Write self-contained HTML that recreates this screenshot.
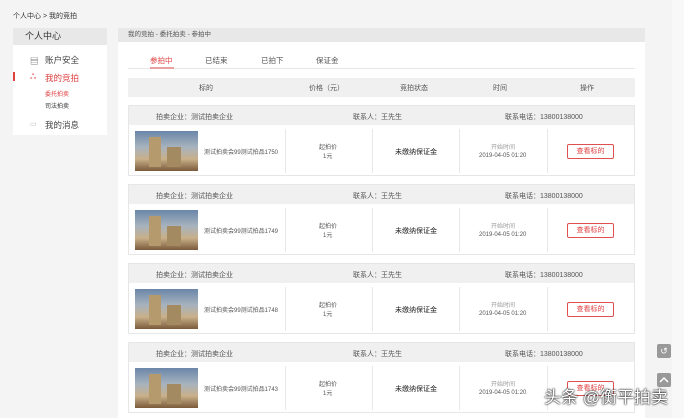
<!DOCTYPE html><html><head><meta charset="utf-8"><style>
*{margin:0;padding:0;box-sizing:border-box}
body{width:684px;height:418px;overflow:hidden;background:#f4f4f4;font-family:"Liberation Sans","Noto Sans CJK SC",sans-serif;position:relative;color:#333}
.a{position:absolute}
.t{font-size:7px;color:#555;white-space:nowrap}
.card{position:absolute;left:128px;width:507px;height:71px;background:#fff;border:1px solid #e6e6e6}
.ch{height:19px;background:#f0f0f0;position:relative}
.img{position:absolute;left:6px;top:25px;width:63px;height:40px;background:linear-gradient(180deg,#6a86a8 0%,#a7b3be 40%,#c9b08a 70%,#7a5a3a 100%)}
.img:before{content:"";position:absolute;left:14px;top:6px;width:12px;height:30px;background:#b59a6e}
.img:after{content:"";position:absolute;left:32px;top:16px;width:14px;height:20px;background:#a48a60}
.dv{position:absolute;top:23px;width:1px;height:44px;background:#e8e8e8}
.btn{position:absolute;left:438px;top:38px;width:47px;height:15px;border:1px solid #e05050;border-radius:2px;color:#e04040;font-size:7px;text-align:center;line-height:13px}
</style></head><body>
<div class="a t" style="left:13px;top:11px;color:#333">个人中心 &gt; 我的竞拍</div>
<div class="a" style="left:13px;top:28px;width:94px;height:107px;background:#fff"></div>
<div class="a" style="left:13px;top:28px;width:94px;height:17px;background:#e8e8e8;font-size:9px;line-height:17px;padding-left:12px">个人中心</div>
<div class="a t" style="left:30px;top:55px;font-size:8.5px">▤</div>
<div class="a" style="left:45px;top:54px;font-size:8.5px;color:#444">账户安全</div>
<div class="a" style="left:13px;top:72px;width:2px;height:9px;background:#e04040"></div>
<div class="a" style="left:30px;top:72px;font-size:8px;color:#e04040">ஃ</div>
<div class="a" style="left:45px;top:72px;font-size:8.5px;color:#e04040">我的竞拍</div>
<div class="a" style="left:45px;top:89px;font-size:6px;color:#e04040">委托拍卖</div>
<div class="a" style="left:45px;top:101px;font-size:6px;color:#333">司法拍卖</div>
<div class="a" style="left:30px;top:120px;font-size:7px;color:#bbb">▭</div>
<div class="a" style="left:45px;top:119px;font-size:8.5px;color:#444">我的消息</div>
<div class="a" style="left:118px;top:28px;width:527px;height:390px;background:#fff"></div>
<div class="a t" style="left:118px;top:28px;width:527px;height:14px;background:#e8e8e8;line-height:14px;padding-left:10px;font-size:6.5px">我的竞拍 - 委托拍卖 - 参拍中</div>
<div class="a" style="left:128px;top:68px;width:507px;height:1px;background:#e6e6e6"></div>
<div class="a" style="left:150px;top:67px;width:24px;height:2px;background:#e9a0a0"></div>
<div class="a t" style="left:150px;top:55px;color:#e04040;font-size:7.5px">参拍中</div>
<div class="a t" style="left:205px;top:55px;font-size:7.5px">已结束</div>
<div class="a t" style="left:261px;top:55px;font-size:7.5px">已拍下</div>
<div class="a t" style="left:316px;top:55px;font-size:7.5px">保证金</div>
<div class="a" style="left:128px;top:78px;width:507px;height:19px;background:#f0f0f0"></div>
<div class="a t" style="left:199px;top:83px">标的</div>
<div class="a t" style="left:309px;top:83px">价格（元）</div>
<div class="a t" style="left:400px;top:83px">竞拍状态</div>
<div class="a t" style="left:493px;top:83px">时间</div>
<div class="a t" style="left:580px;top:83px">操作</div>

<div class="card" style="top:105px"><div class="ch"><span class="a t" style="left:27px;top:6px">拍卖企业：测试拍卖企业</span><span class="a t" style="left:224px;top:6px">联系人：王先生</span><span class="a t" style="left:376px;top:6px">联系电话：13800138000</span></div><div class="img"></div><span class="a t" style="left:75px;top:41px;font-size:6px">测试拍卖会99测试拍品1750</span><div class="dv" style="left:156px"></div><span class="a t" style="left:190px;top:36px;font-size:6px">起拍价</span><span class="a t" style="left:194px;top:45px;font-size:6px">1元</span><div class="dv" style="left:243px"></div><span class="a t" style="left:266px;top:41px;color:#222">未缴纳保证金</span><div class="dv" style="left:330px"></div><span class="a t" style="left:362px;top:36px;font-size:6px;color:#999">开始时间</span><span class="a t" style="left:350px;top:47px;font-size:6px">2019-04-05 01:20</span><div class="dv" style="left:418px"></div><div class="btn">查看标的</div></div>
<div class="card" style="top:184px"><div class="ch"><span class="a t" style="left:27px;top:6px">拍卖企业：测试拍卖企业</span><span class="a t" style="left:224px;top:6px">联系人：王先生</span><span class="a t" style="left:376px;top:6px">联系电话：13800138000</span></div><div class="img"></div><span class="a t" style="left:75px;top:41px;font-size:6px">测试拍卖会99测试拍品1749</span><div class="dv" style="left:156px"></div><span class="a t" style="left:190px;top:36px;font-size:6px">起拍价</span><span class="a t" style="left:194px;top:45px;font-size:6px">1元</span><div class="dv" style="left:243px"></div><span class="a t" style="left:266px;top:41px;color:#222">未缴纳保证金</span><div class="dv" style="left:330px"></div><span class="a t" style="left:362px;top:36px;font-size:6px;color:#999">开始时间</span><span class="a t" style="left:350px;top:47px;font-size:6px">2019-04-05 01:20</span><div class="dv" style="left:418px"></div><div class="btn">查看标的</div></div>
<div class="card" style="top:263px"><div class="ch"><span class="a t" style="left:27px;top:6px">拍卖企业：测试拍卖企业</span><span class="a t" style="left:224px;top:6px">联系人：王先生</span><span class="a t" style="left:376px;top:6px">联系电话：13800138000</span></div><div class="img"></div><span class="a t" style="left:75px;top:41px;font-size:6px">测试拍卖会99测试拍品1748</span><div class="dv" style="left:156px"></div><span class="a t" style="left:190px;top:36px;font-size:6px">起拍价</span><span class="a t" style="left:194px;top:45px;font-size:6px">1元</span><div class="dv" style="left:243px"></div><span class="a t" style="left:266px;top:41px;color:#222">未缴纳保证金</span><div class="dv" style="left:330px"></div><span class="a t" style="left:362px;top:36px;font-size:6px;color:#999">开始时间</span><span class="a t" style="left:350px;top:47px;font-size:6px">2019-04-05 01:20</span><div class="dv" style="left:418px"></div><div class="btn">查看标的</div></div>
<div class="card" style="top:342px"><div class="ch"><span class="a t" style="left:27px;top:6px">拍卖企业：测试拍卖企业</span><span class="a t" style="left:224px;top:6px">联系人：王先生</span><span class="a t" style="left:376px;top:6px">联系电话：13800138000</span></div><div class="img"></div><span class="a t" style="left:75px;top:41px;font-size:6px">测试拍卖会99测试拍品1743</span><div class="dv" style="left:156px"></div><span class="a t" style="left:190px;top:36px;font-size:6px">起拍价</span><span class="a t" style="left:194px;top:45px;font-size:6px">1元</span><div class="dv" style="left:243px"></div><span class="a t" style="left:266px;top:41px;color:#222">未缴纳保证金</span><div class="dv" style="left:330px"></div><span class="a t" style="left:362px;top:36px;font-size:6px;color:#999">开始时间</span><span class="a t" style="left:350px;top:47px;font-size:6px">2019-04-05 01:20</span><div class="dv" style="left:418px"></div><div class="btn">查看标的</div></div>

<div class="a" style="left:672px;top:0;width:12px;height:418px;background:#f8f8f8"></div>
<div class="a" style="left:657px;top:344px;width:14px;height:14px;background:#999;border-radius:2px;color:#fff;font-size:9px;text-align:center;line-height:14px">↺</div>
<div class="a" style="left:657px;top:373px;width:14px;height:14px;background:#999;border-radius:2px"><svg width="14" height="14"><path d="M3 9 L7 5 L11 9" stroke="#fff" stroke-width="1.5" fill="none"/></svg></div>
<div class="a" style="left:544px;top:383px;font-size:17px;color:#fff;text-shadow:0 0 2px #000,0 0 1px #000;white-space:nowrap">头条 @衡平拍卖</div>
</body></html>
